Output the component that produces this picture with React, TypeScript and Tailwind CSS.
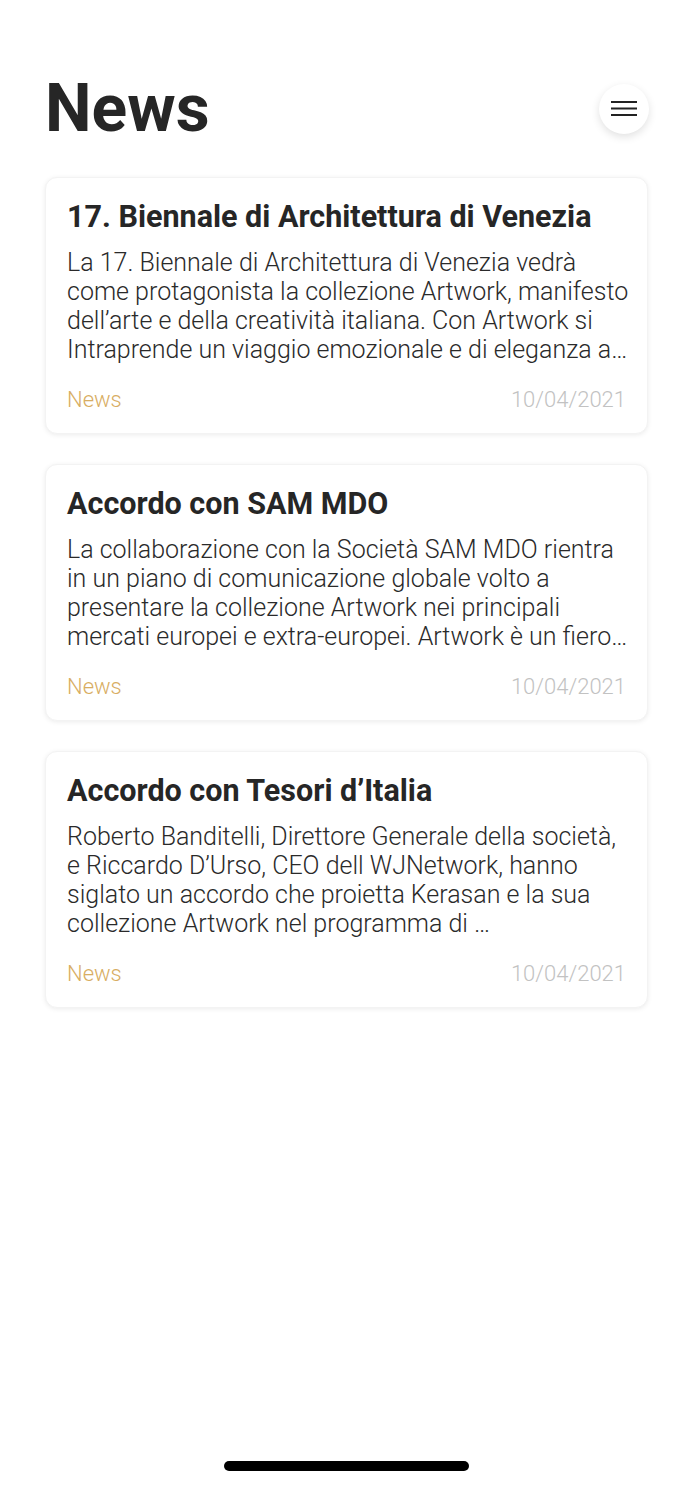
import React from "react";

type Item = { title: string; lines: string[]; tag: string; date: string };

const items: Item[] = [
  {
    title: "17. Biennale di Architettura di Venezia",
    lines: [
      "La 17. Biennale di Architettura di Venezia vedrà",
      "come protagonista la collezione Artwork, manifesto",
      "dell’arte e della creatività italiana. Con Artwork si",
      "Intraprende un viaggio emozionale e di eleganza a…",
    ],
    tag: "News",
    date: "10/04/2021",
  },
  {
    title: "Accordo con SAM MDO",
    lines: [
      "La collaborazione con la Società SAM MDO rientra",
      "in un piano di comunicazione globale volto a",
      "presentare la collezione Artwork nei principali",
      "mercati europei e extra-europei. Artwork è un fiero…",
    ],
    tag: "News",
    date: "10/04/2021",
  },
  {
    title: "Accordo con Tesori d’Italia",
    lines: [
      "Roberto Banditelli, Direttore Generale della società,",
      "e Riccardo D’Urso, CEO dell WJNetwork, hanno",
      "siglato un accordo che proietta Kerasan e la sua",
      "collezione Artwork nel programma di …",
    ],
    tag: "News",
    date: "10/04/2021",
  },
];

export default function App() {
  return (
    <div
      className="relative min-h-[1500px] w-full bg-white"
      style={{ fontFamily: "Roboto, 'Noto Sans', sans-serif" }}
    >
      <div className="px-[45px] pt-[76px]">
        <div className="flex items-center justify-between">
          <h1 className="text-[66px] font-bold leading-none text-[#262626]">
            News
          </h1>
          <button className="mr-[-1px] flex h-[50px] w-[50px] items-center justify-center rounded-full bg-white shadow-[0_3px_8px_rgba(0,0,0,0.12)]">
            <svg width="26" height="16" viewBox="0 0 26 16">
              <rect x="0" y="0" width="26" height="2" fill="#222" />
              <rect x="0" y="6.5" width="26" height="2" fill="#222" />
              <rect x="0" y="13" width="26" height="2" fill="#222" />
            </svg>
          </button>
        </div>

        <div className="mt-[35px] flex flex-col gap-[30px]">
          {items.map((it, i) => (
            <div
              key={i}
              className="h-[257px] rounded-[12px] border border-[#f3f3f3] bg-white pl-[21px] pr-[17px] pt-[21px] shadow-[0_1px_5px_rgba(0,0,0,0.08)]"
            >
              <div className="whitespace-nowrap text-[30.5px] font-bold leading-[36px] text-[#262626]">
                {it.title}
              </div>
              <div className="mt-[13px] text-[25px] font-light leading-[29px] text-[#2a2a2a]">
                {it.lines.map((l, j) => (
                  <div key={j} className="whitespace-nowrap">
                    {l}
                  </div>
                ))}
              </div>
              <div className="mt-[23px] flex items-center justify-between pr-[4px] text-[22px] font-light leading-[26px]">
                <span className="text-[#d8ad62]">{it.tag}</span>
                <span className="text-[#c2c2c2]">{it.date}</span>
              </div>
            </div>
          ))}
        </div>
      </div>

      <div className="absolute left-[224px] top-[1461px] h-[10px] w-[245px] rounded-full bg-black" />
    </div>
  );
}
